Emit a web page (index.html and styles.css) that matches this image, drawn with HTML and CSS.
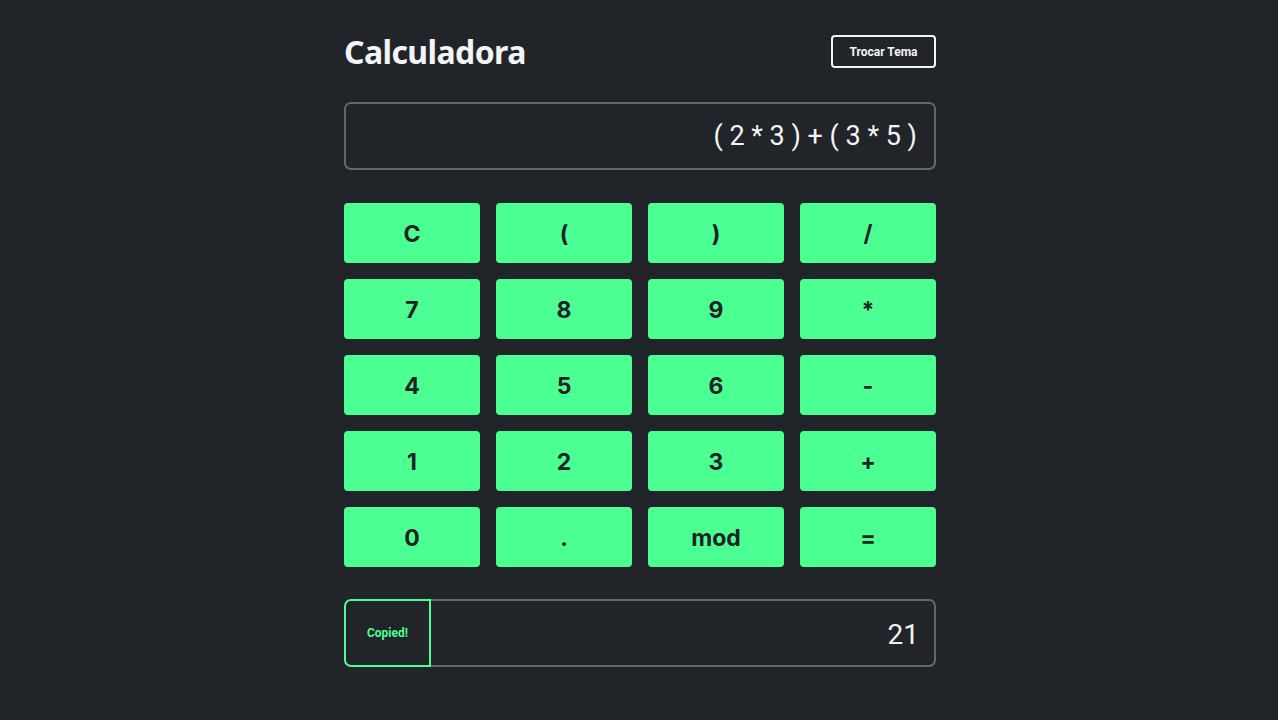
FILE: index.html
```html
<!DOCTYPE html>
<html lang="pt">
<head>
<meta charset="utf-8">
<title>Calculadora</title>
<link rel="stylesheet" href="styles.css">
</head>
<body>
<main class="calc">
  <header class="calc-header">
    <h1 class="calc-title">Calculadora</h1>
    <button class="theme-btn">Trocar Tema</button>
  </header>
  <div class="display">( 2 * 3 ) + ( 3 * 5 )</div>
  <div class="keypad">
    <button class="key">C</button>
    <button class="key">(</button>
    <button class="key">)</button>
    <button class="key">/</button>
    <button class="key">7</button>
    <button class="key">8</button>
    <button class="key">9</button>
    <button class="key">*</button>
    <button class="key">4</button>
    <button class="key">5</button>
    <button class="key">6</button>
    <button class="key">-</button>
    <button class="key">1</button>
    <button class="key">2</button>
    <button class="key">3</button>
    <button class="key">+</button>
    <button class="key">0</button>
    <button class="key">.</button>
    <button class="key">mod</button>
    <button class="key">=</button>
  </div>
  <div class="result">
    <button class="copy-btn">Copied!</button>
    <div class="result-value">21</div>
  </div>
</main>
</body>
</html>
```
FILE: styles.css
```css
* { box-sizing: border-box; }
html, body {
  margin: 0;
  padding: 0;
  background: #212429;
  min-height: 100%;
}
body {
  padding-left: 2px;
  font-family: Roboto, "Liberation Sans", sans-serif;
  color: #f3f4f6;
}
.calc {
  width: 592px;
  margin: 0 auto;
  padding-top: 35px;
}
.calc-header {
  display: flex;
  justify-content: space-between;
  align-items: center;
  height: 33px;
}
.calc-title {
  margin: 0;
  font-family: "Noto Sans", "Open Sans", sans-serif;
  font-weight: 700;
  font-size: 32px;
  letter-spacing: -0.6px;
  color: #f3f4f6;
}
.theme-btn {
  width: 105px;
  height: 33px;
  background: transparent;
  border: 2px solid #f3f4f6;
  border-radius: 4px;
  color: #f3f4f6;
  font-family: Roboto, sans-serif;
  font-weight: 700;
  font-size: 12px;
  padding: 0;
}
.display {
  margin-top: 34px;
  height: 68px;
  border: 2px solid #66676b;
  border-radius: 7px;
  display: flex;
  align-items: center;
  justify-content: flex-end;
  padding: 0 17px;
  font-size: 27px;
  font-weight: 400;
  color: #f3f4f6;
}
.keypad {
  margin-top: 33px;
  display: grid;
  grid-template-columns: repeat(4, 1fr);
  grid-auto-rows: 60px;
  gap: 16px;
}
.key {
  background: #4cff93;
  border: none;
  border-radius: 4px;
  font-family: Inter, sans-serif;
  font-weight: 700;
  font-size: 23px;
  color: #1f2227;
  padding: 1px 0 0;
}
.result {
  margin-top: 32px;
  height: 68px;
  display: flex;
}
.copy-btn {
  width: 87px;
  height: 100%;
  background: transparent;
  border: 2px solid #4cff93;
  border-radius: 7px 0 0 7px;
  color: #4cff93;
  font-family: Roboto, sans-serif;
  font-weight: 700;
  font-size: 12px;
  padding: 0;
}
.result-value {
  flex: 1;
  border: 2px solid #66676b;
  border-left: none;
  border-radius: 0 7px 7px 0;
  display: flex;
  align-items: center;
  justify-content: flex-end;
  padding: 2px 15px 0;
  font-size: 28px;
  color: #f3f4f6;
}
```
